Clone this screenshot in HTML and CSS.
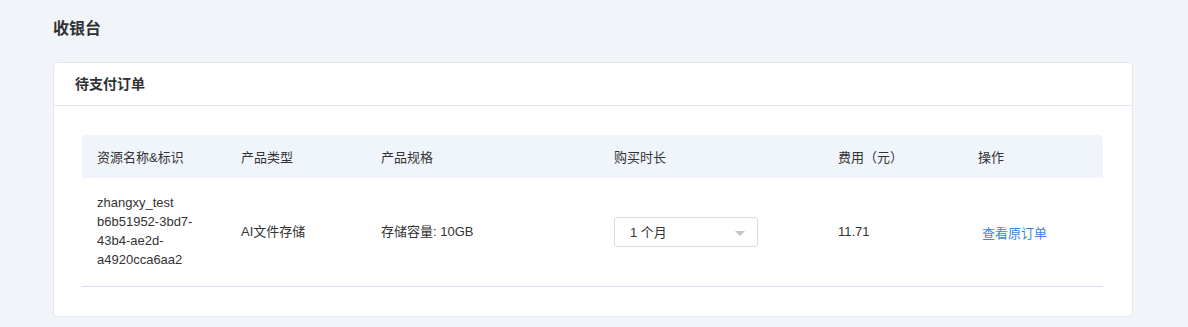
FILE: index.html
```html
<!DOCTYPE html>
<html lang="zh-CN">
<head>
<meta charset="utf-8">
<title>收银台</title>
<link rel="stylesheet" href="styles.css">
</head>
<body>
<div class="page">
  <h1 class="page-title">收银台</h1>
  <div class="card">
    <div class="card-header">待支付订单</div>
    <div class="card-body">
      <table class="table">
        <colgroup>
          <col class="c1"><col class="c2"><col class="c3"><col class="c4"><col class="c5"><col class="c6">
        </colgroup>
        <thead>
          <tr>
            <th>资源名称&amp;标识</th>
            <th>产品类型</th>
            <th>产品规格</th>
            <th>购买时长</th>
            <th>费用（元）</th>
            <th>操作</th>
          </tr>
        </thead>
        <tbody>
          <tr>
            <td class="name">zhangxy_test<br>b6b51952-3bd7-<br>43b4-ae2d-<br>a4920cca6aa2</td>
            <td>AI文件存储</td>
            <td>存储容量: 10GB</td>
            <td>
              <div class="select">
                <span>1 个月</span>
                <span class="arrow"></span>
              </div>
            </td>
            <td>11.71</td>
            <td><a class="link" href="#">查看原订单</a></td>
          </tr>
        </tbody>
      </table>
    </div>
  </div>
</div>
</body>
</html>
```

FILE: styles.css
```css
* { box-sizing: border-box; }
html, body {
  margin: 0;
  padding: 0;
  background: #f1f4f8;
  font-family: "Liberation Sans", "Noto Sans CJK SC", sans-serif;
  color: #333;
}
.page {
  padding: 17px 55px 10px 53px;
}
.page-title {
  margin: 0;
  font-size: 16px;
  line-height: 24px;
  font-weight: bold;
  color: #303133;
}
.card {
  margin-top: 21px;
  background: #fff;
  border: 1px solid #e4e7ed;
  border-radius: 4px;
}
.card-header {
  height: 43px;
  line-height: 42px;
  padding-left: 21px;
  font-size: 14px;
  font-weight: bold;
  color: #303133;
  border-bottom: 1px solid #e4e7ed;
}
.card-body {
  padding: 29px 28px 29px 28px;
}
.table {
  width: 1021px;
  border-collapse: separate;
  border-spacing: 0;
  table-layout: fixed;
  font-size: 13px;
}
.c1 { width: 144px; }
.c2 { width: 140px; }
.c3 { width: 233px; }
.c4 { width: 224px; }
.c5 { width: 140px; }
.c6 { width: 140px; }
.table th {
  background: #f0f4fb;
  height: 43px;
  padding: 0 15px;
  text-align: left;
  font-weight: normal;
  color: #333;
}
.table th:first-child { border-top-left-radius: 4px; }
.table th:last-child { border-top-right-radius: 4px; }
.table td {
  padding: 15px 15px 17px 15px;
  line-height: 19px;
  border-bottom: 1px solid #d6e0ee;
  vertical-align: middle;
  color: #333;
}
.select {
  display: flex;
  align-items: center;
  justify-content: space-between;
  width: 144px;
  height: 30px;
  padding: 0 12px 0 15px;
  border: 1px solid #d8dce5;
  border-radius: 3px;
  background: #fff;
  margin-top: 2px;
}
.arrow {
  width: 0;
  height: 0;
  border-left: 5px solid transparent;
  border-right: 5px solid transparent;
  border-top: 5px solid #c0c4cc;
  margin-top: 2px;
}
.link {
  color: #3a86e6;
  text-decoration: none;
  margin-left: 4px;
  position: relative;
  top: 2px;
}
```
